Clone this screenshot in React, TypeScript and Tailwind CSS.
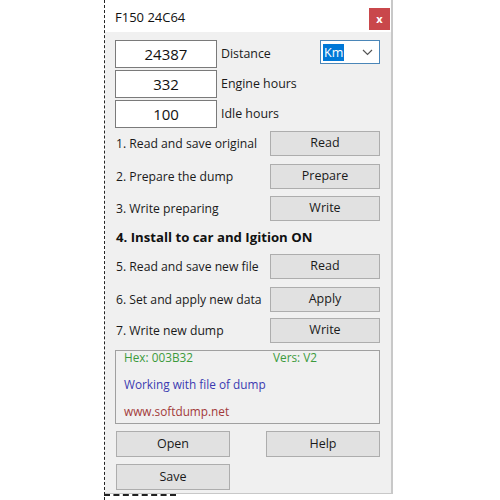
import React from "react";

const font = { fontFamily: '"Open Sans", "Noto Sans", Arial, sans-serif' };

// Plain Win32-style push button
const WinButton: React.FC<{ label: string; className?: string }> = ({ label, className = "" }) => (
    <button
        className={`h-[25px] bg-[#e1e1e1] border border-[#adadad] text-[12.5px] text-[#1a1a1a] flex items-center justify-center ${className}`}
    >
        {label}
    </button>
);

// Counter field with its caption
const NumberField: React.FC<{ value: string; label: string; className?: string }> = ({ value, label, className = "" }) => (
    <div className={`flex items-center ${className}`}>
        <div className="w-[102px] h-[28px] bg-white border border-[#7a7a7a] flex items-center justify-center text-[15px] text-[#111]">
            {value}
        </div>
        <span className="ml-[4px] text-[12.4px] text-[#1a1a1a]">{label}</span>
    </div>
);

// One numbered step with its action button
const StepRow: React.FC<{ text: string; action: string; className?: string }> = ({ text, action, className = "" }) => (
    <div className={`flex items-center h-[25px] ${className}`}>
        <span className="flex-1 text-[12.2px] text-[#1a1a1a] pl-[1px] pt-[2px] whitespace-nowrap">{text}</span>
        <WinButton label={action} className="w-[110px]" />
    </div>
);

const App: React.FC = () => {
    return (
        <div className="w-[500px] h-[500px] bg-white flex relative" style={font}>
            {/* dashed guide along the left side */}
            <div className="ml-[104px] h-full border-l border-dashed border-[#222]" />

            <div className="flex flex-col">
                <div className="w-[288px] h-[494px] flex flex-col border-r-2 border-b border-[#c8c8c8]">
                    {/* title bar */}
                    <div className="h-[32px] bg-white flex items-start justify-between pl-[10px]">
                        <span className="mt-[8px] text-[13px] text-[#111]">F150 24C64</span>
                        <div className="mt-[8px] mr-[1px] w-[21px] h-[22px] bg-[#c9474b] flex items-center justify-center text-white text-[11px] font-bold">
                            x
                        </div>
                    </div>

                    {/* form body */}
                    <div className="flex-1 bg-[#f0f0f0] pl-[10px] pr-[11px] pt-[8px] flex flex-col">
                        <div className="flex items-start">
                            <NumberField value="24387" label="Distance" className="flex-1" />
                            <div className="w-[60px] h-[24px] bg-white border border-[#4a86b8] flex items-center justify-between pl-[2px] pr-[6px]">
                                <span className="bg-[#0078d7] text-white text-[12.5px] leading-[17px] px-[1px]">Km</span>
                                <svg width="11" height="7" viewBox="0 0 11 7" fill="none">
                                    <path d="M1 1l4.5 4.5L10 1" stroke="#555" strokeWidth="1.2" />
                                </svg>
                            </div>
                        </div>
                        <NumberField value="332" label="Engine hours" className="mt-[2px]" />
                        <NumberField value="100" label="Idle hours" className="mt-[2px]" />

                        <StepRow text="1. Read and save original" action="Read" className="mt-[3px]" />
                        <StepRow text="2. Prepare the dump" action="Prepare" className="mt-[8px]" />
                        <StepRow text="3. Write preparing" action="Write" className="mt-[7px]" />
                        <div className="h-[33px] flex items-center text-[13.2px] font-bold text-[#111] pl-[1px]">
                            4. Install to car and Igition ON
                        </div>
                        <StepRow text="5. Read and save new file" action="Read" />
                        <StepRow text="6. Set and apply new data" action="Apply" className="mt-[8px]" />
                        <StepRow text="7. Write new dump" action="Write" className="mt-[6px]" />

                        {/* status box */}
                        <div className="mt-[7px] h-[74px] border border-[#a0a0a0] pl-[8px] flex flex-col text-[11.8px] leading-[16px]">
                            <div className="flex mt-[-2px] text-[#3c9a3c]">
                                <span className="w-[149px]">Hex: 003B32</span>
                                <span>Vers: V2</span>
                            </div>
                            <span className="mt-[11px] text-[#3b3bb0]">Working with file of dump</span>
                            <span className="mt-[11px] text-[#a23a3a]">www.softdump.net</span>
                        </div>

                        <div className="mt-[7px] flex justify-between pl-[1px]">
                            <WinButton label="Open" className="w-[114px] h-[26px]" />
                            <WinButton label="Help" className="w-[114px] h-[26px]" />
                        </div>
                        <div className="mt-[7px] pl-[1px]">
                            <WinButton label="Save" className="w-[114px] h-[26px]" />
                        </div>
                    </div>
                </div>
                {/* dashed stub under the window */}
                <div className="w-[72px] border-t-2 border-dashed border-[#222] -ml-[1px]" />
            </div>
        </div>
    );
};

export default App;
